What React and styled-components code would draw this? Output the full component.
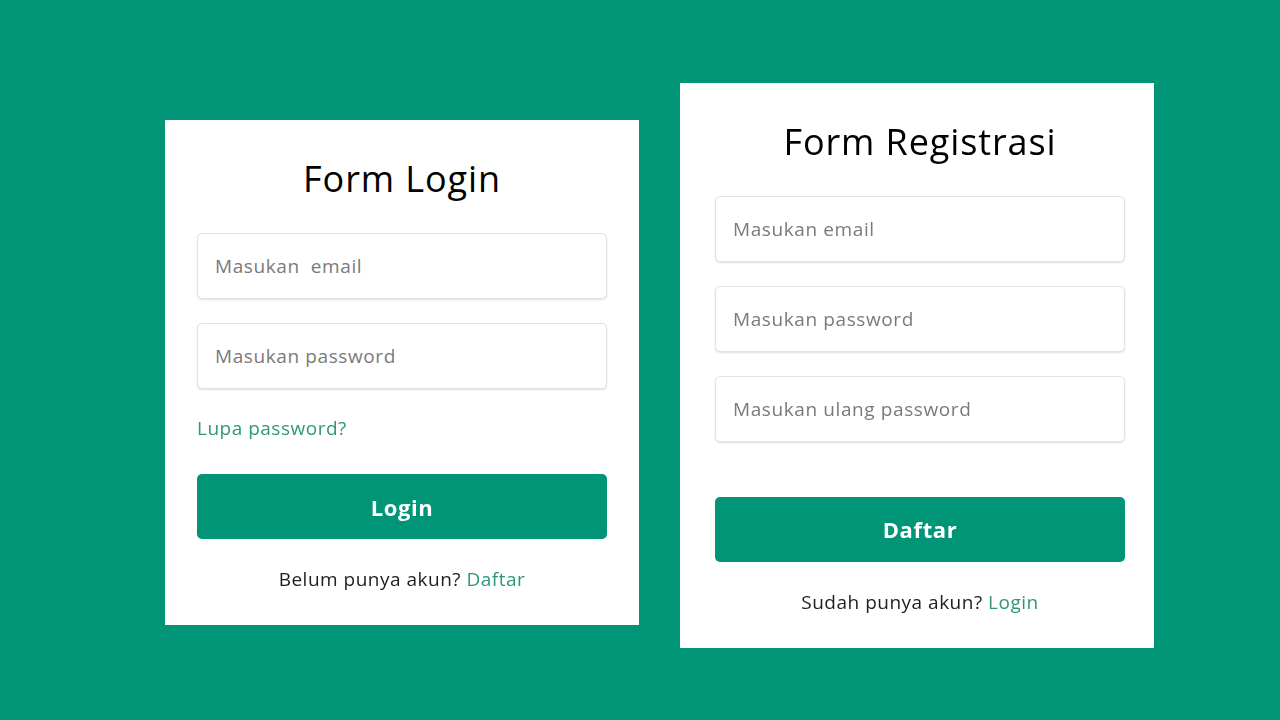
import React, { useEffect, useRef } from 'react';
import styled, { createGlobalStyle } from 'styled-components';

const GlobalStyle = createGlobalStyle`
  html, body {
    margin: 0;
    padding: 0;
    background: #009577;
    font-family: "Open Sans", "Noto Sans", Arial, sans-serif;
  }
`;

const Page = styled.div`
  width: 1280px;
  height: 720px;
  display: flex;
  align-items: center;
  justify-content: center;
  gap: 41px;
  padding: 10px 0 0 39px;
  box-sizing: border-box;
`;

const Card = styled.form`
  width: 474px;
  box-sizing: border-box;
  background: #fff;
  padding: 32px ${p => 64 - (p.$inset || 32)}px 32px ${p => p.$inset || 32}px;
  display: flex;
  flex-direction: column;
  margin-top: ${p => p.$shift || 0}px;
`;

const Title = styled.h1`
  margin: 0 0 27px;
  text-align: center;
  font-size: 36px;
  line-height: 54px;
  font-weight: 500;
  color: #000;
  letter-spacing: 0.9px;
`;

const Input = styled.input`
  height: 66px;
  box-sizing: border-box;
  border: 1px solid #e2e2e2;
  border-radius: 5px;
  box-shadow: 0 1px 2px rgba(0, 0, 0, 0.12);
  padding: 0 17px;
  margin-bottom: ${p => (p.$last ? 0 : 24)}px;
  font-family: inherit;
  font-size: 19px;
  letter-spacing: 0.6px;
  color: #333;
  outline: none;
  caret-color: #000;

  &::placeholder {
    color: #7a7a7a;
  }
`;

const Forgot = styled.a`
  display: block;
  font-size: 19px;
  line-height: 27px;
  letter-spacing: 0.5px;
  color: #2f967b;
  text-decoration: none;
  margin: 26px 0 32px;
`;

const Button = styled.button`
  height: 65px;
  border: none;
  border-radius: 5px;
  background: #009577;
  color: #fff;
  font-family: inherit;
  font-size: 22px;
  font-weight: 700;
  letter-spacing: 0.6px;
  cursor: pointer;
  margin-top: ${p => p.$gap || 0}px;
`;

const Footer = styled.p`
  margin: 27px 0 0;
  text-align: center;
  font-size: 19px;
  line-height: 27px;
  letter-spacing: 0.5px;
  color: #1e1e1e;
`;

const Link = styled.a`
  color: #2f967b;
  text-decoration: none;
`;

export default function App() {
  const passwordRef = useRef(null);

  useEffect(() => {
    if (passwordRef.current) passwordRef.current.focus();
  }, []);

  return (
    <>
      <GlobalStyle />
      <Page>
        <Card $shift={15} onSubmit={e => e.preventDefault()}>
          <Title>Form Login</Title>
          <Input type="email" placeholder="Masukan  email" />
          <Input ref={passwordRef} type="password" placeholder="Masukan password" $last />
          <Forgot href="#">Lupa password?</Forgot>
          <Button type="submit">Login</Button>
          <Footer>
            Belum punya akun? <Link href="#">Daftar</Link>
          </Footer>
        </Card>
        <Card $shift={0} $inset={35} onSubmit={e => e.preventDefault()}>
          <Title>Form Registrasi</Title>
          <Input type="email" placeholder="Masukan email" />
          <Input type="password" placeholder="Masukan password" />
          <Input type="password" placeholder="Masukan ulang password" $last />
          <Button type="submit" $gap={55}>Daftar</Button>
          <Footer>
            Sudah punya akun? <Link href="#">Login</Link>
          </Footer>
        </Card>
      </Page>
    </>
  );
}
